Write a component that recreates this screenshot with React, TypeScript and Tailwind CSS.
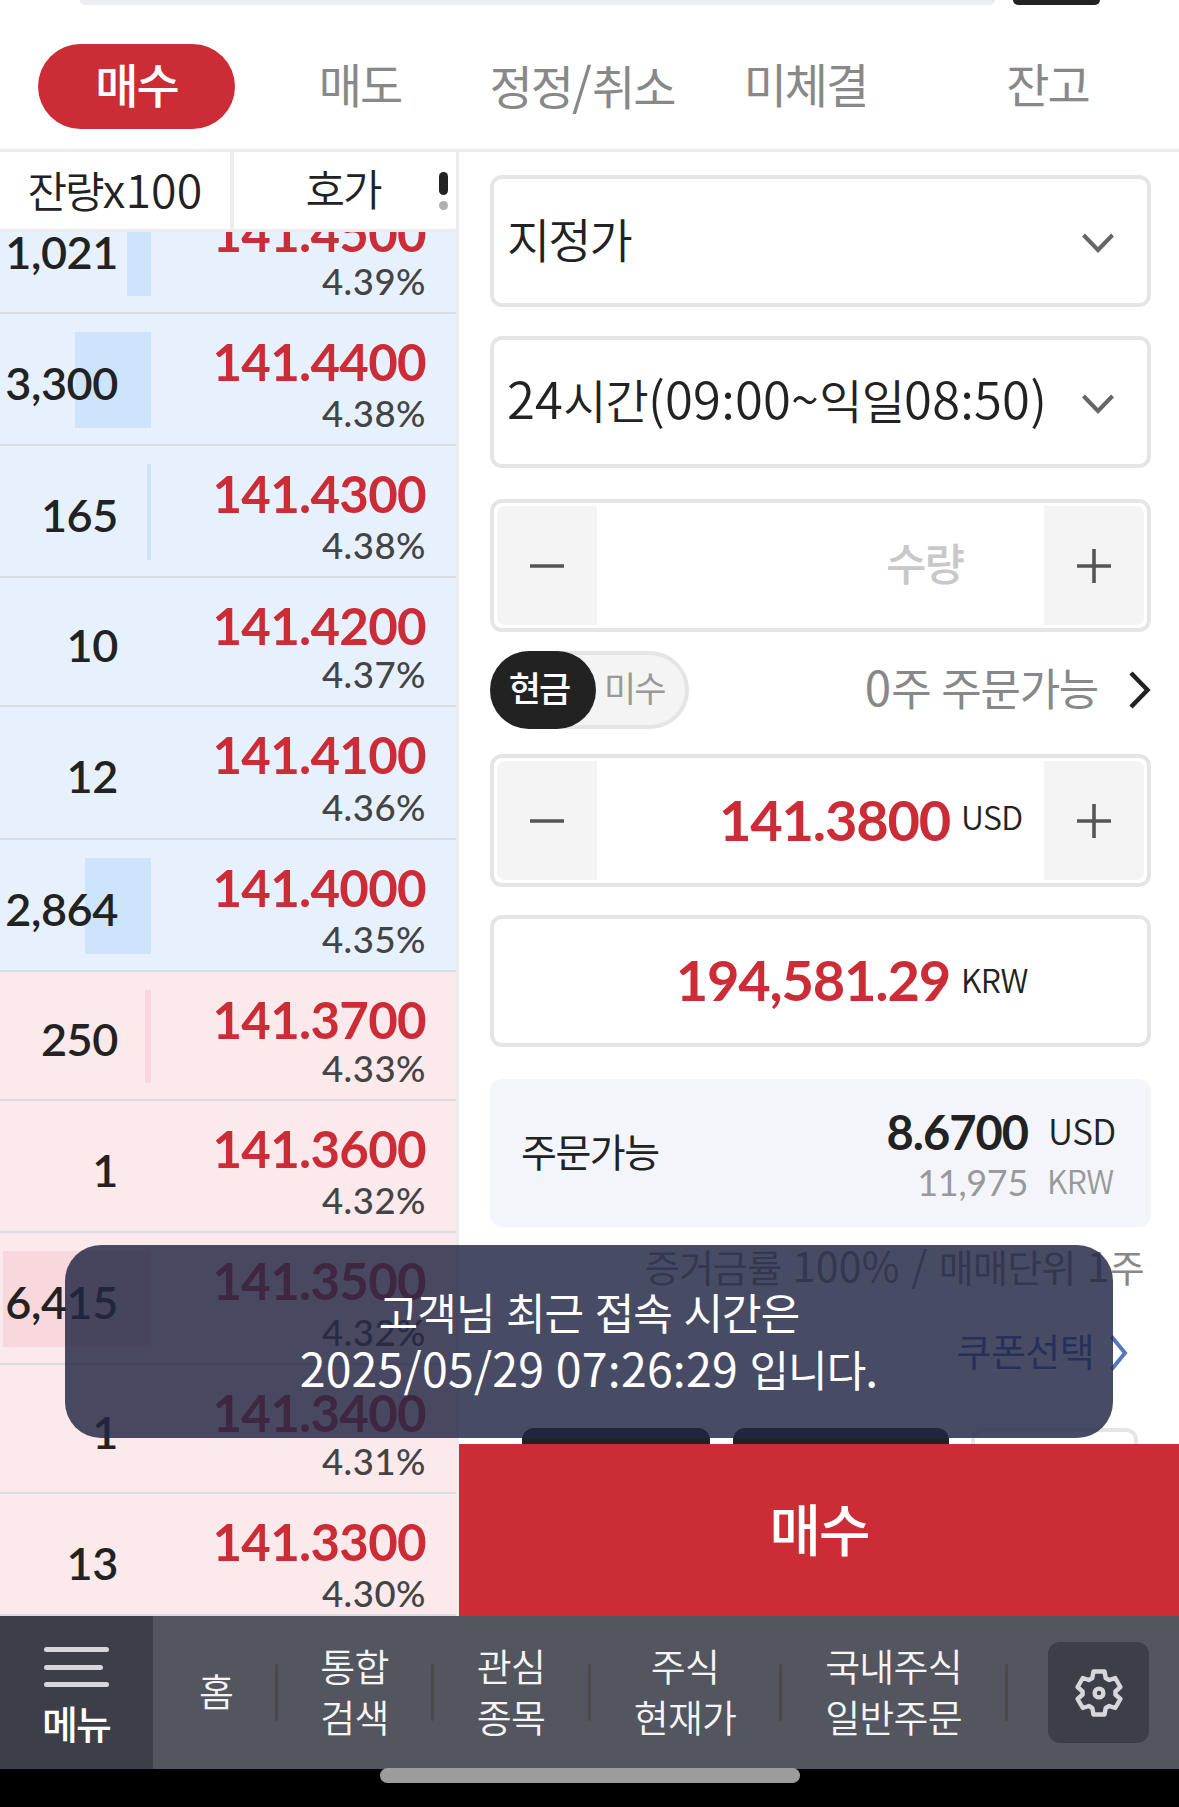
import { useState } from "react"

const asks = [
  { qty: 1021, price: "141.4500", rate: "4.39%", height: "h-[129px]" },
  { qty: 3300, price: "141.4400", rate: "4.38%", height: "h-[132px]" },
  { qty: 165, price: "141.4300", rate: "4.38%", height: "h-[132px]" },
  { qty: 10, price: "141.4200", rate: "4.37%", height: "h-[129px]" },
  { qty: 12, price: "141.4100", rate: "4.36%", height: "h-[133px]" },
  { qty: 2864, price: "141.4000", rate: "4.35%", height: "h-[132px]" },
]

const bids = [
  { qty: 250, price: "141.3700", rate: "4.33%", height: "h-[129px]" },
  { qty: 1, price: "141.3600", rate: "4.32%", height: "h-[132px]" },
  { qty: 6415, price: "141.3500", rate: "4.32%", height: "h-[132px]" },
  { qty: 1, price: "141.3400", rate: "4.31%", height: "h-[129px]" },
  { qty: 13, price: "141.3300", rate: "4.30%", height: "h-[132px]" },
]

const maxQty = 6415

const tabs = [
  { label: "매수", width: "w-[197px]" },
  { label: "매도", width: "w-[252px]" },
  { label: "정정/취소", width: "w-[192px]" },
  { label: "미체결", width: "w-[255px]" },
  { label: "잔고", width: "w-[229px]" },
]

const shortcuts = [
  { lines: ["홈"], width: "w-[125px] pl-[4px]" },
  { lines: ["통합", "검색"], width: "w-[156px]" },
  { lines: ["관심", "종목"], width: "w-[157px]" },
  { lines: ["주식", "현재가"], width: "w-[191px]" },
  { lines: ["국내주식", "일반주문"], width: "w-[226px]" },
]

// digits and punctuation run slightly larger than the hangul around them
function Mixed({ text }: { text: string }) {
  return (
    <>
      {text.split(/([^가-힣]+)/).map((part, i) =>
        i % 2 ? (
          <span key={i} className="text-[1.08em] tracking-[0.2px]">{part}</span>
        ) : (
          part
        )
      )}
    </>
  )
}

function QuoteRow({ row, side }: { row: (typeof asks)[number]; side: "ask" | "bid" }) {
  const bg = side === "ask" ? "bg-[#e7f1fe]" : "bg-[#fce9eb]"
  const bar = side === "ask" ? "bg-[#cde4fc]" : "bg-[#f8d8dc]"
  return (
    <div className={`flex shrink-0 border-b-2 border-[#d9dce1] font-[Lato] ${bg} ${row.height}`}>
      <div className="relative flex w-[151px] shrink-0 items-center justify-end pr-[33px] pt-[7px]">
        {row.qty > 100 && (
          <div
            className={`absolute bottom-[16px] right-0 top-[18px] ${bar}`}
            style={{ width: `${(row.qty / maxQty) * 148}px` }}
          />
        )}
        <span className="relative text-[45px] font-semibold leading-[56px] tracking-[-0.4px] text-[#222]">
          {row.qty.toLocaleString("en-US")}
        </span>
      </div>
      <div className="flex flex-1 flex-col justify-between pb-[13px] pr-[30px] pt-[18px] text-right">
        <p className="text-[51px] font-bold leading-[60px] tracking-[-0.7px] text-[#cb2c36]">{row.price}</p>
        <p className="text-[36.5px] font-medium leading-[36px] tracking-[0.5px] text-[#444]">{row.rate}</p>
      </div>
    </div>
  )
}

function Chevron() {
  return (
    <svg className="mt-[3px] h-[20px] w-[32px]" viewBox="0 0 32 20" fill="none" stroke="#666" strokeWidth="4">
      <path d="M1.5 2 L16 17 L30.5 2" />
    </svg>
  )
}

function StepButton({ plus }: { plus?: boolean }) {
  return (
    <button className={`flex h-full w-[100px] items-center justify-center bg-[#f4f4f4] ${plus ? "rounded-r-lg" : "rounded-l-lg"}`}>
      <svg className="h-[34px] w-[34px]" viewBox="0 0 34 34" stroke="#555" strokeWidth="3.6">
        <path d="M0 17H34" />
        {plus && <path d="M17 0V34" />}
      </svg>
    </button>
  )
}

export default function App() {
  const [active, setActive] = useState("매수")

  return (
    <div className="relative flex h-[1807px] w-[1179px] flex-col overflow-hidden bg-white font-['Noto_Sans_CJK_KR',sans-serif] text-[#222]">
      <div className="flex h-[5px] shrink-0 gap-[18px] pl-[80px]">
        <div className="w-[915px] rounded-b-[5px] bg-[#ebedf2]" />
        <div className="w-[87px] rounded-b-[5px] bg-[#222]" />
      </div>

      <nav className="flex h-[147px] shrink-0 items-start border-b-[3px] border-[#ededed] pl-[38px] pt-[39px]">
        {tabs.map((tab) => (
          <button
            key={tab.label}
            onClick={() => setActive(tab.label)}
            className={`flex h-[85px] items-center justify-center rounded-full pb-[6px] text-[47px] tracking-[-2px] ${tab.width} ${
              active === tab.label ? "bg-[#cb2c36] font-medium text-white" : "pr-[2px] font-normal text-[#888]"
            }`}
          >
            <span>
              <Mixed text={tab.label} />
            </span>
          </button>
        ))}
      </nav>

      <main className="flex h-[1464px] shrink-0">
        <section className="flex w-[459px] flex-col overflow-hidden border-r-[3px] border-[#ededed]">
          <div className="flex h-[80px] shrink-0 border-b-[3px] border-[#ededed] text-[43px] font-[350] tracking-[-2px]">
            <div className="flex w-[234px] items-center justify-center border-r-4 border-[#ededed] pb-[6px]">
              <span>
                <Mixed text="잔량x100" />
              </span>
            </div>
            <div className="relative flex flex-1 items-center justify-center pb-[6px] pr-[4px]">
              호가
              <div className="absolute right-[8px] top-[20px] flex flex-col gap-[6px]">
                <span className="h-[23px] w-[9px] rounded-full bg-[#222]" />
                <span className="h-[9px] w-[9px] rounded-full bg-[#b0b0b0]" />
              </div>
            </div>
          </div>
          <div className="flex flex-1 flex-col overflow-hidden border-b-2 border-[#dcdcdc]">
            <div className="-mt-[47px]">
              {asks.map((row) => (
                <QuoteRow key={row.price} row={row} side="ask" />
              ))}
              {bids.map((row) => (
                <QuoteRow key={row.price} row={row} side="bid" />
              ))}
            </div>
          </div>
        </section>

        <section className="flex flex-1 flex-col overflow-hidden">
          <div className="flex h-[1292px] flex-col overflow-hidden pl-[31px] pr-[28px] pt-[23px]">
            <div className="flex h-[132px] shrink-0 items-center justify-between rounded-xl border-4 border-[#e5e5e5] pl-[13px] pr-[33px]">
              <span className="pb-[6px] text-[47px] font-[350] tracking-[-2px]">지정가</span>
              <Chevron />
            </div>
            <div className="mt-[29px] flex h-[132px] shrink-0 items-center justify-between rounded-xl border-4 border-[#e5e5e5] pl-[13px] pr-[33px]">
              <span className="pb-[9px] text-[47px] font-[350] tracking-[-0.8px]">
                <Mixed text="24시간(09:00~익일08:50)" />
              </span>
              <Chevron />
            </div>
            <div className="mt-[31px] flex h-[133px] shrink-0 items-center rounded-xl border-4 border-[#e5e5e5] p-[3px]">
              <StepButton />
              <span className="flex-1 pb-[7px] pr-[81px] text-right text-[44px] font-medium tracking-[-2px] text-[#c8c8c8]">수량</span>
              <StepButton plus />
            </div>

            <div className="mt-[19px] flex h-[78px] shrink-0 items-center">
              <div className="flex h-full w-[199px] items-center rounded-full bg-[#f4f4f4] text-[35px] tracking-[-2px] shadow-[inset_0_0_0_4px_#e5e5e5]">
                <span className="flex h-full w-[106px] items-center justify-center rounded-full bg-[#222] pb-[6px] pr-[8px] font-medium text-white">현금</span>
                <span className="pb-[6px] pl-[8px] text-[#999]">미수</span>
              </div>
              <span className="flex-1 pb-[8px] pr-[31px] text-right text-[44px] tracking-[-1.3px] text-[#888]">
                <Mixed text="0주 주문가능" />
              </span>
              <svg className="h-[38px] w-[22px]" viewBox="0 0 22 38" fill="none" stroke="#222" strokeWidth="4.5">
                <path d="M2 2 L18.5 19 L2 36" />
              </svg>
            </div>

            <div className="mt-[25px] flex h-[133px] shrink-0 items-center rounded-xl border-4 border-[#e5e5e5] p-[3px]">
              <StepButton />
              <span className="flex-1 pb-[2px] text-right font-[Lato] text-[56px] font-bold tracking-[-1.2px] text-[#cb2c36]">141.3800</span>
              <span className="w-[94px] pb-[10px] pl-[11px] text-[32px] font-[350] tracking-[-0.6px]">USD</span>
              <StepButton plus />
            </div>
            <div className="mt-[28px] flex h-[132px] shrink-0 items-center rounded-xl border-4 border-[#e5e5e5] pr-[103px]">
              <span className="flex-1 pb-[2px] text-right font-[Lato] text-[56px] font-bold tracking-[-1.2px] text-[#cb2c36]">194,581.29</span>
              <span className="w-[94px] pb-[4px] pl-[11px] text-[32px] font-[350] tracking-[-0.6px]">KRW</span>
            </div>

            <div className="mt-[32px] flex h-[148px] shrink-0 items-center justify-between rounded-xl bg-[#f4f5fb] pl-[31px] pr-[32px]">
              <span className="pb-[6px] text-[39px] tracking-[-1.5px]">주문가능</span>
              <div className="pt-[6px]">
                <div className="flex h-[51px] items-center justify-end">
                  <span className="pt-[2px] font-[Lato] text-[47px] font-bold tracking-[-1px]">8.6700</span>
                  <span className="w-[91px] shrink-0 pb-[3px] pl-[20px] text-[35px] font-[350] tracking-[-0.5px]">USD</span>
                </div>
                <div className="flex h-[49px] items-center justify-end text-[#999]">
                  <span className="font-[Lato] text-[36px] tracking-[-0.3px]">11,975</span>
                  <span className="w-[91px] shrink-0 pb-[4px] pl-[19px] text-[32px] font-[350] tracking-[-0.8px]">KRW</span>
                </div>
              </div>
            </div>

            <p className="mt-[9px] shrink-0 pr-[7px] text-right text-[38px] leading-[56px] tracking-[-0.8px] text-[#888] [word-spacing:2px]">
              <Mixed text="증거금률 100% / 매매단위 1주" />
            </p>
            <div className="mt-[28px] flex shrink-0 items-center justify-end gap-[16px] pr-[23px] text-[38px] leading-[56px] tracking-[-0.6px] text-[#3b61b5]">
              쿠폰선택
              <svg className="mt-[6px] h-[36px] w-[18px]" viewBox="0 0 18 36" fill="none" stroke="#5677bf" strokeWidth="4">
                <path d="M1.5 1.5 L15 18 L1.5 34.5" />
              </svg>
            </div>
            <div className="mt-[50px] flex shrink-0 pl-[32px]">
              <div className="h-[90px] w-[188px] rounded-xl bg-[#222]" />
              <div className="ml-[23px] h-[90px] w-[216px] rounded-xl bg-[#222]" />
              <div className="ml-[22px] h-[90px] w-[167px] rounded-xl border-4 border-[#e5e5e5]" />
            </div>
          </div>
          <button className="flex-1 bg-[#cb2c36] pb-[6px] text-[56px] font-medium tracking-[-2px] text-white">매수</button>
        </section>
      </main>

      <footer className="flex h-[153px] shrink-0 bg-[#53565e] text-[#f5f5f6]">
        <button className="flex w-[153px] flex-col items-start bg-[#3c3f48] pl-[44px] pt-[31px]">
          <span className="h-[5px] w-[65px] rounded-full bg-[#d6d7da]" />
          <span className="mt-[13px] h-[5px] w-[59px] rounded-full bg-[#d6d7da]" />
          <span className="mt-[12px] h-[5px] w-[65px] rounded-full bg-[#d6d7da]" />
          <span className="-ml-[2px] mt-[9px] text-[39px] font-medium leading-[52px] tracking-[-2px] text-white">메뉴</span>
        </button>
        {shortcuts.map((item) => (
          <div key={item.lines[0]} className={`flex items-center ${item.width}`}>
            <div className="flex-1 pb-[6px] text-center text-[38px] font-[350] leading-[51px] tracking-[-0.8px]">
              {item.lines.map((line) => (
                <p key={line}>{line}</p>
              ))}
            </div>
            <div className="h-[57px] w-[3px] rounded-full bg-[#484a4e]" />
          </div>
        ))}
        <button className="ml-[40px] mt-[26px] flex h-[101px] w-[101px] items-center justify-center rounded-xl bg-[#3c3f47]">
          <svg className="h-[48px] w-[48px]" viewBox="0 0 48 48" fill="none" stroke="#d6d7da" strokeWidth="4.4" strokeLinejoin="round">
            <path d="M18.5 2.5h11l1.2 6.5 3.5 2 6-2 5.2 9-5 4.5v3l5 4.5-5.2 9-6-2-3.5 2-1.2 6.5h-11l-1.2-6.5-3.5-2-6 2-5.2-9 5-4.5v-3l-5-4.5 5.2-9 6 2 3.5-2z" />
            <circle cx="24" cy="24" r="4.4" />
          </svg>
        </button>
      </footer>
      <div className="flex-1 bg-black" />

      <div className="absolute left-[380px] top-[1768px] h-[15px] w-[420px] rounded-full bg-[#9c9c9c]" />
      <div className="absolute left-[65px] top-[1245px] h-[193px] w-[1048px] rounded-[36px] bg-[rgba(35,39,68,0.83)] pt-[37px] text-center text-[43px] leading-[56px] tracking-[-1px] text-white [word-spacing:1px]">
        <p>
          <Mixed text="고객님 최근 접속 시간은" />
        </p>
        <p>
          <Mixed text="2025/05/29 07:26:29 입니다." />
        </p>
      </div>
    </div>
  )
}
